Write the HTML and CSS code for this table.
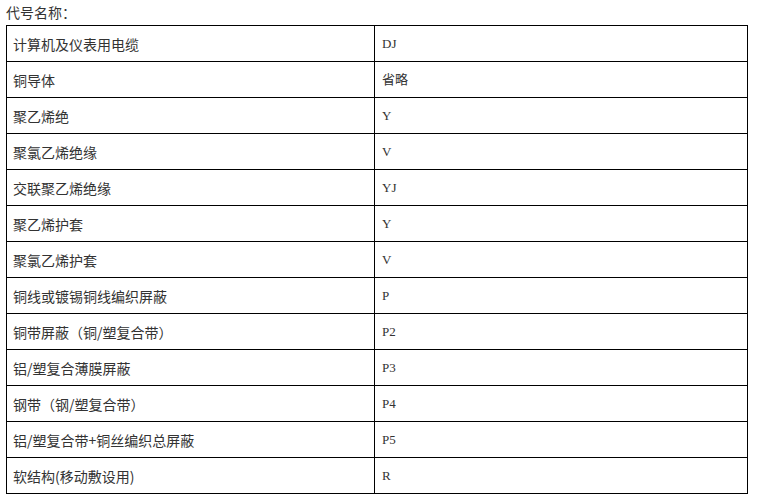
FILE: index.html
```html
<!DOCTYPE html>
<html lang="zh">
<head>
<meta charset="utf-8">
<link rel="stylesheet" href="styles.css">
</head>
<body>
<div class="title">代号名称：</div>
<table class="codes">
<tr><td class="name">计算机及仪表用电缆</td><td class="code">DJ</td></tr>
<tr><td class="name">铜导体</td><td class="code">省略</td></tr>
<tr><td class="name">聚乙烯绝</td><td class="code">Y</td></tr>
<tr><td class="name">聚氯乙烯绝缘</td><td class="code">V</td></tr>
<tr><td class="name">交联聚乙烯绝缘</td><td class="code">YJ</td></tr>
<tr><td class="name">聚乙烯护套</td><td class="code">Y</td></tr>
<tr><td class="name">聚氯乙烯护套</td><td class="code">V</td></tr>
<tr><td class="name">铜线或镀锡铜线编织屏蔽</td><td class="code">P</td></tr>
<tr><td class="name">铜带屏蔽（铜/塑复合带）</td><td class="code">P2</td></tr>
<tr><td class="name">铝/塑复合薄膜屏蔽</td><td class="code">P3</td></tr>
<tr><td class="name">钢带（钢/塑复合带）</td><td class="code">P4</td></tr>
<tr><td class="name">铝/塑复合带+铜丝编织总屏蔽</td><td class="code">P5</td></tr>
<tr><td class="name">软结构(移动敷设用)</td><td class="code">R</td></tr>
</table>
</body>
</html>
```
FILE: styles.css
```css
html, body {
  margin: 0;
  padding: 0;
  background: #fff;
}
body {
  padding: 0 6px;
  color: #333;
  font-family: "Noto Sans CJK SC", "Noto Sans", sans-serif;
}
.title {
  height: 25px;
  line-height: 24px;
  font-size: 14px;
}
.codes {
  border-collapse: collapse;
  width: 742px;
  table-layout: fixed;
}
.codes td {
  border: 1px solid #000;
  height: 35px;
  padding: 0;
  line-height: 20px;
  vertical-align: middle;
  white-space: nowrap;
}
.codes td.name {
  width: 361px;
  padding-left: 6px;
  font-size: 14px;
}
.codes td.code {
  padding-left: 7px;
  font-size: 13px;
  font-family: "Liberation Serif", "Noto Sans CJK SC", serif;
}
```
